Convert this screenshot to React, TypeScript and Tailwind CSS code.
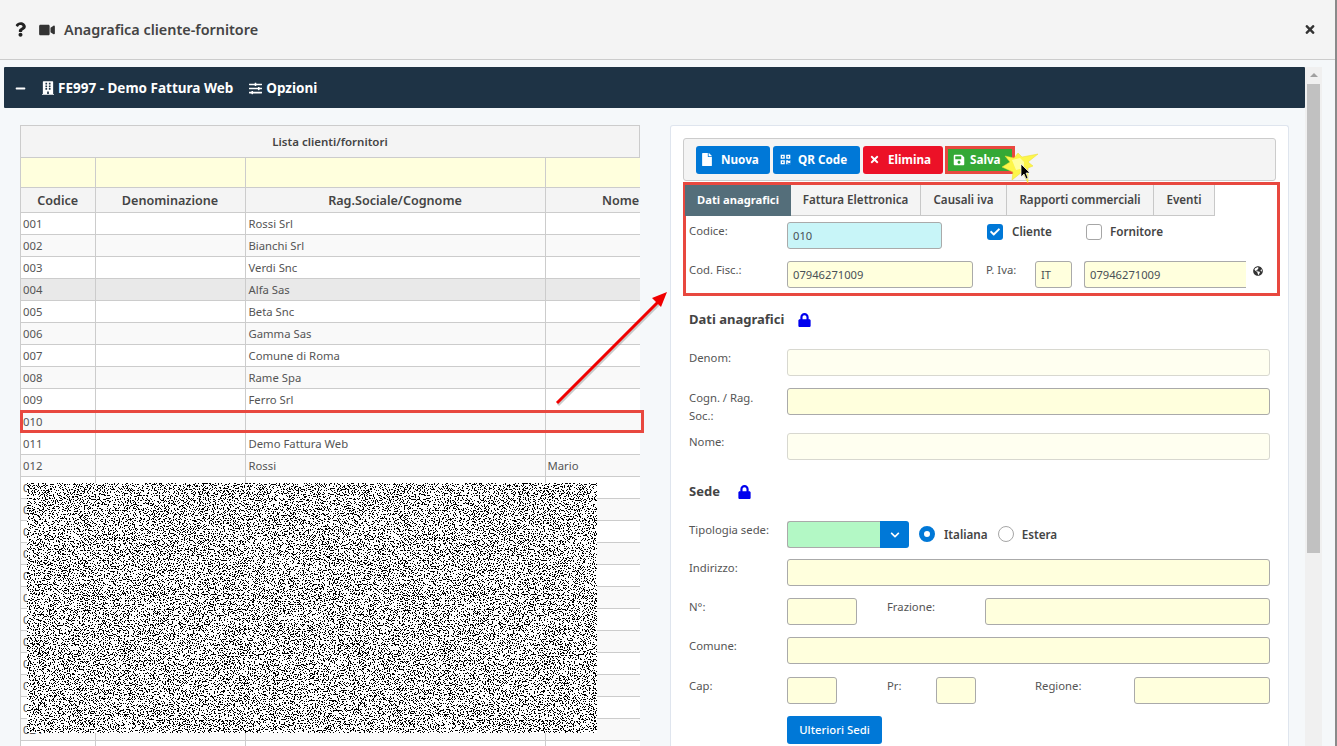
import { FaBuilding, FaCheck, FaChevronDown, FaFile, FaGlobeAmericas, FaLock, FaMinus, FaQrcode, FaQuestion, FaSave, FaSlidersH, FaTimes, FaVideo } from 'react-icons/fa';

const ROWS = [
  ['001', 'Rossi Srl', ''],
  ['002', 'Bianchi Srl', ''],
  ['003', 'Verdi Snc', ''],
  ['004', 'Alfa Sas', ''],
  ['005', 'Beta Snc', ''],
  ['006', 'Gamma Sas', ''],
  ['007', 'Comune di Roma', ''],
  ['008', 'Rame Spa', ''],
  ['009', 'Ferro Srl', ''],
  ['010', '', ''],
  ['011', 'Demo Fattura Web', ''],
  ['012', 'Rossi', 'Mario'],
  ['013', '', ''],
  ['014', '', ''],
  ['015', '', ''],
  ['016', '', ''],
  ['017', '', ''],
  ['018', '', ''],
  ['019', '', ''],
  ['020', '', ''],
  ['021', '', ''],
  ['022', '', ''],
  ['023', '', ''],
  ['024', '', ''],
  ['', '', ''],
];

const TABS = ['Dati anagrafici', 'Fattura Elettronica', 'Causali iva', 'Rapporti commerciali', 'Eventi'];
const TAB_W = ['w-[106px]', 'w-[130px]', 'w-[86px]', 'w-[147px]', 'w-[61px]'];

// soglia del rumore: 17 valori neri su 40
const NOISE_TABLE = [...Array(17).fill(0), ...Array(23).fill(1)].join(' ');

function Field({ className = '', value = '', faded = false }: { className?: string; value?: string; faded?: boolean }) {
  return (
    <div
      className={`h-[27px] rounded-[3px] border px-[5px] text-[11.2px] leading-[26px] text-[#495057] ${
        faded ? 'border-[#d8d8d0] bg-[#fffff0]' : 'border-[#aaa] bg-[#ffffdd]'
      } ${className}`}
    >
      {value}
    </div>
  );
}

function Label({ children, className = '' }: { children: React.ReactNode; className?: string }) {
  return <div className={`text-[11.3px] leading-[18px] text-[#555] ${className}`}>{children}</div>;
}

function ToolButton({ icon, label, className }: { icon: React.ReactNode; label: string; className: string }) {
  return (
    <div className={`flex h-[28px] items-center rounded-[3px] text-[11.7px] font-bold text-white ${className}`}>
      {icon}
      <span>{label}</span>
    </div>
  );
}

export default function App() {
  return (
    <div className="relative flex h-[746px] w-[1337px] overflow-hidden bg-[#f5f8fa] font-['Noto_Sans',sans-serif] text-[#333]">
      <div className="flex w-[1335px] flex-col">
        <div className="flex h-[60px] shrink-0 items-center border-b border-[#ccc] bg-[#f4f4f4]">
          <FaQuestion className="ml-[15px] h-[15px] w-[11px] text-[#222]" />
          <FaVideo className="ml-[12px] h-[14px] w-[18px] text-[#333]" />
          <span className="ml-[8px] text-[14.4px] font-semibold text-[#444]">Anagrafica cliente-fornitore</span>
          <FaTimes className="ml-auto mr-[19px] h-[13px] w-[12px] text-[#333]" />
        </div>

        <div className="flex min-h-0 flex-1">
          <div className="w-[1305px] pl-[4px] pt-[7px]">
            <div className="flex h-[41px] items-center rounded-[1px] bg-[#1e3345] pt-[1px] text-[13.5px] font-bold text-white">
              <FaMinus className="ml-[11px] h-[11px] w-[11px]" />
              <FaBuilding className="ml-[16px] h-[14px] w-[12px]" />
              <span className="ml-[4px]">FE997 - Demo Fattura Web</span>
              <FaSlidersH className="ml-[15px] h-[13px] w-[15px]" />
              <span className="ml-[3px]">Opzioni</span>
            </div>

            <div className="mt-[17px] flex pl-[16px]">
              <div className="w-[620px] shrink-0 overflow-hidden border-l border-t border-[#ccc] text-[11.3px] text-[#555]">
                <div className="flex h-[32px] items-center justify-center border-b border-r border-[#ccc] bg-[#f4f4f4] text-[11.5px] font-semibold text-[#444]">
                  Lista clienti/fornitori
                </div>
                <table className="w-[675px] table-fixed border-collapse">
                  <colgroup>
                    <col className="w-[74px]" />
                    <col className="w-[150px]" />
                    <col className="w-[300px]" />
                    <col className="w-[151px]" />
                  </colgroup>
                  <thead>
                    <tr className="h-[29px] bg-[#ffffdd]">
                      <th className="border-r border-b border-[#ccc]" />
                      <th className="border-r border-b border-[#ccc]" />
                      <th className="border-r border-b border-[#ccc]" />
                      <th className="border-b border-[#ccc]" />
                    </tr>
                    <tr className="h-[25px] bg-[#f4f4f4] text-[12.6px] text-[#444]">
                      {['Codice', 'Denominazione', 'Rag.Sociale/Cognome', 'Nome'].map(h => (
                        <th key={h} className="border-r border-b border-[#ccc] px-0 pb-0 pt-[3px] text-center font-semibold">
                          {h}
                        </th>
                      ))}
                    </tr>
                  </thead>
                  <tbody>
                    {ROWS.map((r, i) => (
                      <tr
                        key={i}
                        className={`h-[22px] ${r[0] === '004' ? 'bg-[#e9e9e9]' : i % 2 === 1 ? 'bg-[#f9f9f9]' : 'bg-white'}`}
                      >
                        <td className="border-r border-b border-[#ccc] px-[2px] pb-0 pt-[2px]">{r[0]}</td>
                        <td className="border-r border-b border-[#ccc]" />
                        <td className="border-r border-b border-[#ccc] px-[3px] pb-0 pt-[2px]">{r[1]}</td>
                        <td className="border-r border-b border-[#ccc] px-[2px] pb-0 pt-[2px]">{r[2]}</td>
                      </tr>
                    ))}
                  </tbody>
                </table>
              </div>

              <div className="ml-[30px] h-[640px] w-[619px] shrink-0 rounded-t-[3px] border-x border-t border-[#dfe5ee] bg-white px-[12px] pt-[12px]">
                <div className="flex h-[43px] items-center gap-[3px] rounded-[3px] border border-[#ccc] bg-[#f4f4f4] pl-[12px]">
                  <ToolButton
                    className="w-[74px] bg-[#0078d7]"
                    icon={<FaFile className="ml-[6px] mr-[9px] h-[13px] w-[10px]" />}
                    label="Nuova"
                  />
                  <ToolButton
                    className="w-[87px] bg-[#0078d7]"
                    icon={<FaQrcode className="ml-[7px] mr-[7px] h-[11px] w-[11px]" />}
                    label="QR Code"
                  />
                  <ToolButton
                    className="w-[80px] bg-[#ec1127]"
                    icon={<FaTimes className="ml-[7px] mr-[9px] h-[11px] w-[9px]" />}
                    label="Elimina"
                  />
                  <ToolButton
                    className="ml-[-1px] w-[70px] rounded-none border-[3px] border-[#e8483f] bg-[#34a835]"
                    icon={<FaSave className="ml-[5px] mr-[5px] h-[12px] w-[12px]" />}
                    label="Salva"
                  />
                </div>

                <div className="mt-[1px] h-[114px] w-[597px] border-[3px] border-[#e8483f]">
                  <div className="ml-[-1px] flex h-[31px] text-[11.6px] font-semibold">
                    {TABS.map((t, i) => (
                      <div
                        key={t}
                        className={`flex items-center justify-center ${TAB_W[i]} ${
                          i === 0
                            ? 'bg-[#546e7a] text-[11.2px] font-bold text-white'
                            : 'border-b border-r border-[#c8c8c8] bg-[#f4f4f4] text-[#444]'
                        }`}
                      >
                        {t}
                      </div>
                    ))}
                  </div>

                  <div className="mt-[6px] flex h-[27px]">
                    <Label className="ml-[3px] w-[98px]">Codice:</Label>
                    <div className="h-[27px] w-[155px] rounded-[3px] border border-[#aaa] bg-[#c8f5f8] px-[5px] text-[11.2px] leading-[26px] text-[#495057]">
                      010
                    </div>
                    <div className="ml-[45px] mt-[2px] flex h-[16px] w-[16px] items-center justify-center rounded-[3px] bg-[#0078d7] text-white">
                      <FaCheck className="h-[10px] w-[10px]" />
                    </div>
                    <span className="ml-[9px] w-[65px] text-[11.7px] font-semibold leading-[18px] text-[#444]">Cliente</span>
                    <div className="ml-[9px] mt-[2px] h-[16px] w-[16px] rounded-[3px] border border-[#a6a6a6] bg-white" />
                    <span className="ml-[8px] text-[11.7px] font-semibold leading-[18px] text-[#444]">Fornitore</span>
                  </div>

                  <div className="mt-[12px] flex h-[27px]">
                    <Label className="ml-[3px] w-[98px]">Cod. Fisc.:</Label>
                    <Field className="w-[186px]" value="07946271009" />
                    <Label className="ml-[13px] w-[49px] whitespace-nowrap">P. Iva:</Label>
                    <Field className="w-[37px] shrink-0" value="IT" />
                    <Field className="ml-[12px] w-[162px] shrink-0 rounded-r-none border-r-0" value="07946271009" />
                    <FaGlobeAmericas className="ml-[7px] mt-[5px] h-[10px] w-[10px] text-[#333]" />
                  </div>
                </div>

                <div className="ml-[6px] mt-[14px] flex h-[20px] items-center text-[13px] font-bold text-[#444]">
                  Dati anagrafici
                  <FaLock className="ml-[14px] h-[14px] w-[13px] text-[#0000ee]" />
                </div>

                <div className="ml-[6px] mt-[19px] flex">
                  <Label className="w-[98px]">Denom:</Label>
                  <Field className="w-[483px]" faded />
                </div>
                <div className="ml-[6px] mt-[12px] flex h-[27px]">
                  <Label className="w-[98px] pt-[1px] leading-[17px]">
                    Cogn. / Rag.
                    <br />
                    Soc.:
                  </Label>
                  <Field className="w-[483px]" />
                </div>
                <div className="ml-[6px] mt-[18px] flex">
                  <Label className="w-[98px]">Nome:</Label>
                  <Field className="w-[483px]" faded />
                </div>

                <div className="ml-[6px] mt-[22px] flex h-[20px] items-center text-[13px] font-bold text-[#444]">
                  Sede
                  <FaLock className="ml-[18px] h-[14px] w-[13px] text-[#0000ee]" />
                </div>

                <div className="ml-[6px] mt-[19px] flex">
                  <Label className="w-[98px]">Tipologia sede:</Label>
                  <div className="h-[27px] w-[93px] rounded-l-[3px] border border-r-0 border-[#aaa] bg-[#b3f8c5]" />
                  <div className="flex h-[27px] w-[29px] items-center justify-center rounded-r-[3px] bg-[#0078d7] text-white">
                    <FaChevronDown className="h-[10px] w-[10px]" />
                  </div>
                  <div className="ml-[10px] mt-[5px] h-[16px] w-[16px] rounded-full border-[5px] border-[#0078d7] bg-white" />
                  <span className="ml-[9px] mt-[4px] text-[11.7px] font-semibold leading-[18px] text-[#444]">Italiana</span>
                  <div className="ml-[10px] mt-[5px] h-[16px] w-[16px] rounded-full border border-[#a6a6a6] bg-white" />
                  <span className="ml-[8px] mt-[4px] text-[11.7px] font-semibold leading-[18px] text-[#444]">Estera</span>
                </div>

                <div className="ml-[6px] mt-[11px] flex">
                  <Label className="w-[98px]">Indirizzo:</Label>
                  <Field className="w-[483px]" />
                </div>
                <div className="ml-[6px] mt-[12px] flex">
                  <Label className="w-[98px]">N°:</Label>
                  <Field className="w-[70px]" />
                  <Label className="ml-[30px] w-[98px]">Frazione:</Label>
                  <Field className="w-[285px]" />
                </div>
                <div className="ml-[6px] mt-[12px] flex">
                  <Label className="w-[98px]">Comune:</Label>
                  <Field className="w-[483px]" />
                </div>
                <div className="ml-[6px] mt-[13px] flex">
                  <Label className="w-[98px]">Cap:</Label>
                  <Field className="w-[50px]" />
                  <Label className="ml-[50px] w-[49px]">Pr:</Label>
                  <Field className="w-[40px]" />
                  <Label className="ml-[59px] w-[99px]">Regione:</Label>
                  <Field className="w-[136px]" />
                </div>
                <div className="ml-[104px] mt-[12px] flex h-[28px] w-[95px] items-center justify-center rounded-[3px] bg-[#0078d7] text-[11.3px] font-medium text-white">
                  Ulteriori Sedi
                </div>
              </div>
            </div>
          </div>

          <div className="mt-[7px] flex w-[17px] flex-col items-center bg-[#f0f0f0]">
            <div className="mt-[6px] h-0 w-0 border-x-[4px] border-b-[4px] border-x-transparent border-b-[#a0a0a0]" />
            <div className="mt-[7px] h-[469px] w-[13px] bg-[#c1c1c1]" />
          </div>
        </div>
      </div>
      <div className="w-[2px] bg-[#8a8a8a]" />

      {/* fascia oscurata sopra la tabella */}
      <svg className="absolute left-[27px] top-[483px]" width="570" height="250">
        <filter id="rumore" x="0" y="0" width="100%" height="100%" colorInterpolationFilters="sRGB">
          <feTurbulence type="fractalNoise" baseFrequency="0.8" numOctaves="3" seed="7" />
          <feColorMatrix values="1 0 0 0 0 1 0 0 0 0 1 0 0 0 0 0 0 0 0 1" />
          <feComponentTransfer>
            <feFuncR type="discrete" tableValues={NOISE_TABLE} />
            <feFuncG type="discrete" tableValues={NOISE_TABLE} />
            <feFuncB type="discrete" tableValues={NOISE_TABLE} />
          </feComponentTransfer>
        </filter>
        <rect width="570" height="250" filter="url(#rumore)" />
      </svg>

      {/* riquadro riga 010 */}
      <div className="absolute left-[20px] top-[410px] h-[23px] w-[624px] border-[3px] border-[#e8483f]" />

      {/* freccia */}
      <svg className="absolute left-[550px] top-[285px]" width="125" height="125">
        <line x1="7" y1="118" x2="110" y2="15" stroke="#999" strokeWidth="3" opacity="0.5" transform="translate(1 2)" />
        <line x1="7" y1="118" x2="110" y2="15" stroke="#f00000" strokeWidth="3" />
        <polygon points="117,7 111,22 102,13" fill="#f00000" />
      </svg>

      {/* stellina e cursore */}
      <svg className="absolute left-[1000px] top-[148px]" width="44" height="38">
        <polygon
          points="5,8 14,10 18,5 22,9 38,6 28,14 33,18 28,20 28,35 22,24 12,32 13,24 2,19 10,14"
          fill="#fdf64a"
          stroke="#e8dc30"
          strokeWidth="0.5"
        />
        <polygon points="12,12 20,10 24,14 24,20 16,22" fill="#ffffa0" />
        <path d="M21 16 v13 l3 -3 l2 5 l2 -1 l-2 -5 h4 z" fill="#000" stroke="#fff" strokeWidth="0.7" />
      </svg>
    </div>
  );
}
